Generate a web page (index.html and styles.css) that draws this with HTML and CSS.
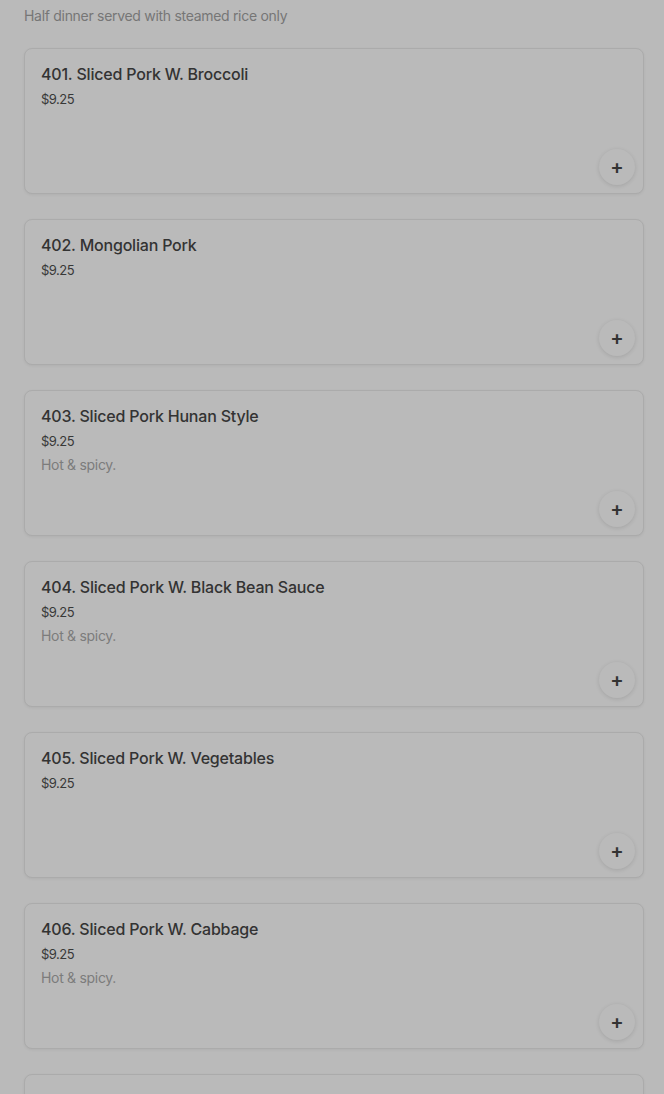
FILE: index.html
```html
<!DOCTYPE html>
<html lang="en">
<head>
    <meta charset="UTF-8">
    <meta name="viewport" content="width=device-width, initial-scale=1.0">
    <title>Pork</title>
    <link rel="stylesheet" href="styles.css">
</head>
<body>
    <p class="category-note">Half dinner served with steamed rice only</p>

    <div class="item-list">
        <div class="item-card">
            <h3 class="item-name">401. Sliced Pork W. Broccoli</h3>
            <div class="item-price">$9.25</div>
            <button class="add-btn" aria-label="Add">+</button>
        </div>
        <div class="item-card">
            <h3 class="item-name">402. Mongolian Pork</h3>
            <div class="item-price">$9.25</div>
            <button class="add-btn" aria-label="Add">+</button>
        </div>
        <div class="item-card">
            <h3 class="item-name">403. Sliced Pork Hunan Style</h3>
            <div class="item-price">$9.25</div>
            <div class="item-desc">Hot &amp; spicy.</div>
            <button class="add-btn" aria-label="Add">+</button>
        </div>
        <div class="item-card">
            <h3 class="item-name">404. Sliced Pork W. Black Bean Sauce</h3>
            <div class="item-price">$9.25</div>
            <div class="item-desc">Hot &amp; spicy.</div>
            <button class="add-btn" aria-label="Add">+</button>
        </div>
        <div class="item-card">
            <h3 class="item-name">405. Sliced Pork W. Vegetables</h3>
            <div class="item-price">$9.25</div>
            <button class="add-btn" aria-label="Add">+</button>
        </div>
        <div class="item-card">
            <h3 class="item-name">406. Sliced Pork W. Cabbage</h3>
            <div class="item-price">$9.25</div>
            <div class="item-desc">Hot &amp; spicy.</div>
            <button class="add-btn" aria-label="Add">+</button>
        </div>
        <!-- next card only peeks in at the bottom -->
        <div class="item-card"></div>
    </div>
</body>
</html>
```

FILE: styles.css
```css
body {
    font-family: Inter, "Noto Sans", sans-serif;
    margin: 0;
    padding: 0 20px 0 24px;
    background-color: #bababa;
    overflow: hidden;
}
.category-note {
    margin: 6px 0 0;
    font-size: 14px;
    line-height: 20px;
    color: #767676;
    letter-spacing: -0.3px;
}
.item-list {
    display: flex;
    flex-direction: column;
    gap: 25px;
    margin-top: 22px;
}
.item-card {
    position: relative;
    height: 146px;
    flex-shrink: 0;
    box-sizing: border-box;
    padding: 14px 16px;
    border: 1px solid #ababab;
    border-radius: 8px;
    background-color: #bababa;
    box-shadow: 0 1px 3px rgba(0,0,0,0.06);
}
.item-name {
    margin: 0;
    font-size: 16px;
    font-weight: 500;
    line-height: 22px;
    color: #333;
    letter-spacing: -0.2px;
}
.item-price {
    margin-top: 4px;
    font-size: 13px;
    line-height: 20px;
    color: #383838;
    letter-spacing: -0.5px;
}
.item-desc {
    margin-top: 4px;
    font-size: 14px;
    line-height: 20px;
    color: #7c7c7c;
    letter-spacing: -0.3px;
}
.add-btn {
    position: absolute;
    right: 8px;
    bottom: 8px;
    width: 36px;
    height: 36px;
    border: none;
    border-radius: 50%;
    background-color: #bababa;
    box-shadow: 0 1px 4px rgba(0,0,0,0.12);
    color: #333;
    font-family: Inter, sans-serif;
    font-size: 20px;
    font-weight: 600;
    line-height: 36px;
    padding: 0;
    cursor: pointer;
}
```
